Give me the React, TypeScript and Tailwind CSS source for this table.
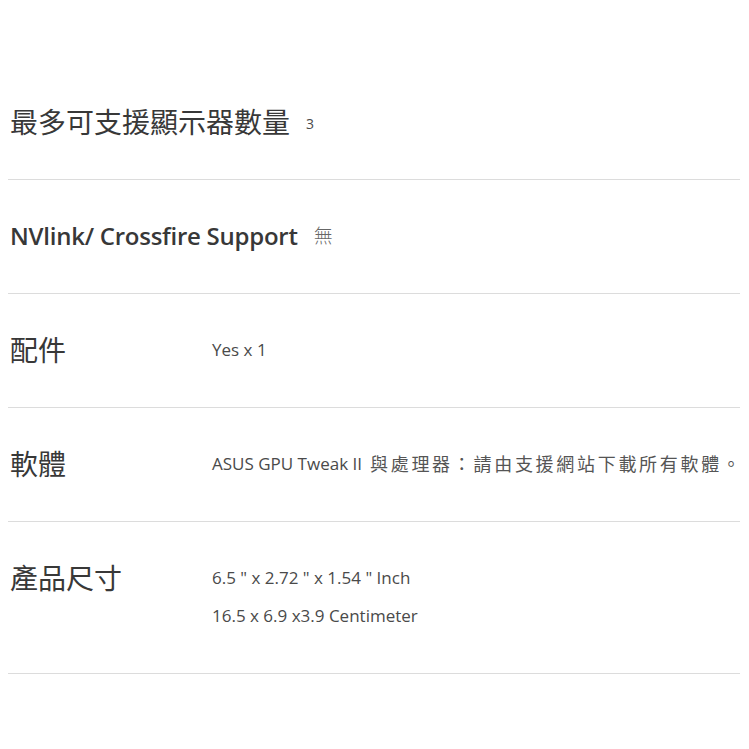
import React from "react";

const font = {
  fontFamily: '"Open Sans", "Noto Sans CJK TC", sans-serif',
};

export default function App() {
  const rowCls = "flex items-start border-b border-[#dcdcdc] pl-[2px] pt-[37px] pb-[38px]";
  const cjkHead = "min-w-[186px] mr-[16px] h-[38px] text-[28px] leading-[38px] font-normal text-[#383838] whitespace-nowrap";
  const valCls = "h-[38px] text-[17px] leading-[38px] text-[#4a4a4a]";
  return (
    <div className="w-[749px] h-[749px] bg-white pt-[66px] pl-[8px] pr-[9px]" style={font}>
      <div className={rowCls}>
        <div className={cjkHead}>最多可支援顯示器數量</div>
        <div className="h-[38px] text-[14px] leading-[38px] pt-[2px] text-[#4a4a4a]">3</div>
      </div>
      <div className={rowCls}>
        <div className="min-w-[186px] mr-[16px] h-[38px] text-[24px] leading-[38px] font-semibold tracking-[-0.25px] text-[#383838] whitespace-nowrap">
          NVlink/ Crossfire Support
        </div>
        <div className="h-[38px] text-[19px] leading-[38px] font-light text-[#666666]">無</div>
      </div>
      <div className={rowCls}>
        <div className={cjkHead}>配件</div>
        <div className={valCls}>Yes x 1</div>
      </div>
      <div className={rowCls}>
        <div className={cjkHead}>軟體</div>
        <div className={valCls + " flex items-center whitespace-nowrap"}>
          <span>ASUS GPU Tweak II</span>
          <span className="ml-[8px] text-[18px] tracking-[2.7px] text-[#555555]">與處理器：請由支援網站下載所有軟體。</span>
        </div>
      </div>
      <div className={rowCls}>
        <div className={cjkHead}>產品尺寸</div>
        <div className="flex flex-col">
          <div className={valCls}>6.5 " x 2.72 " x 1.54 " Inch</div>
          <div className={valCls}>16.5 x 6.9 x3.9 Centimeter</div>
        </div>
      </div>
    </div>
  );
}
